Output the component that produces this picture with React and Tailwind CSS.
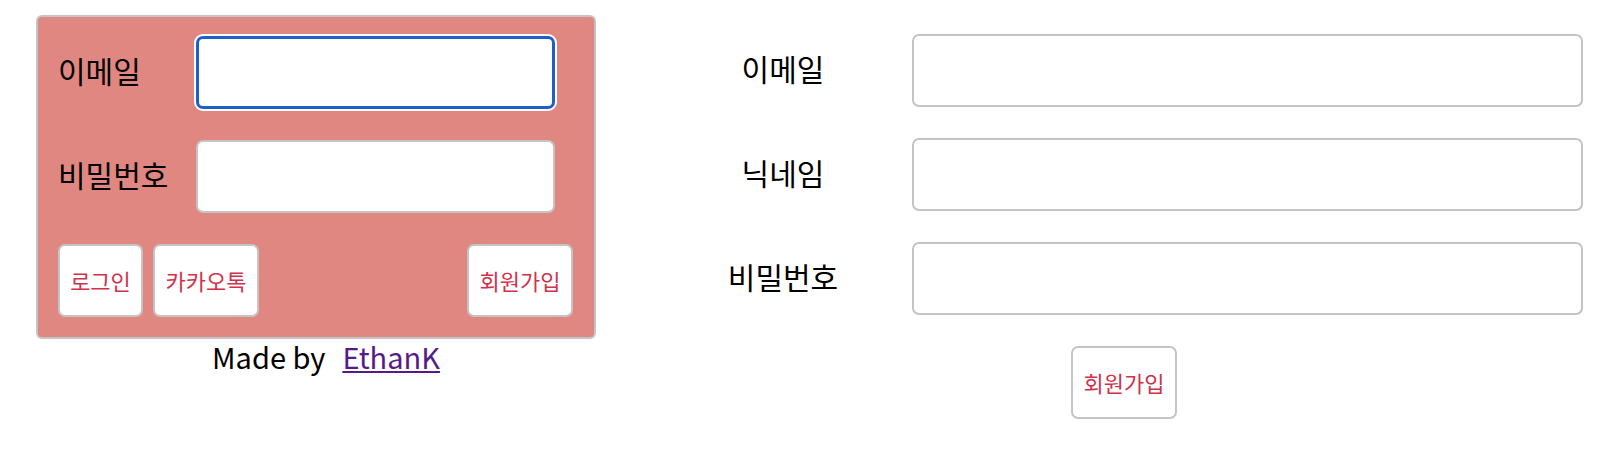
export default function App() {
  const font = { fontFamily: '"Noto Sans CJK KR", "Noto Sans", sans-serif' };
  const btn =
    "h-[73px] bg-white border-2 border-[#c4c4c4] rounded-[7px] text-[22px] text-[#d1324b] flex items-center justify-center";
  return (
    <div style={font} className="flex pt-[15px] pl-[36px] text-black">
      <div className="w-[560px] flex flex-col">
        <div className="w-full border-2 border-[#c4c4c4] rounded-[6px] bg-[#e08782] pl-[20px] pr-[21px] pt-[19px] pb-[20px]">
          <div className="flex items-center h-[73px]">
            <div className="w-[138px] pb-[6px] text-[30px] leading-none">이메일</div>
            <div className="w-[359px] h-[73px] bg-white border-[3px] border-[#1f5fc9] rounded-[7px] ring-2 ring-white"></div>
          </div>
          <div className="flex items-center h-[73px] mt-[31px]">
            <div className="w-[138px] pb-[6px] text-[30px] leading-none">비밀번호</div>
            <div className="w-[359px] h-[73px] bg-white border-2 border-[#c4c4c4] rounded-[7px]"></div>
          </div>
          <div className="flex justify-between mt-[31px]">
            <div className="flex gap-[10px]">
              <button className={`${btn} w-[85px]`}>로그인</button>
              <button className={`${btn} w-[106px]`}>카카오톡</button>
            </div>
            <button className={`${btn} w-[106px]`}>회원가입</button>
          </div>
        </div>
        <div className="flex justify-center pl-[20px] text-[29px] leading-[34px]">
          <span>Made by</span>
          <a href="#" className="ml-[17px] text-[#551a8b] underline">EthanK</a>
        </div>
      </div>
      <div className="ml-[58px] w-[929px] pt-[19px] flex flex-col">
        <div className="flex items-center h-[73px]">
          <div className="w-[258px] pb-[6px] text-center text-[30px] leading-none">이메일</div>
          <div className="w-[671px] h-[73px] bg-white border-2 border-[#c4c4c4] rounded-[7px]"></div>
        </div>
        <div className="flex items-center h-[73px] mt-[31px]">
          <div className="w-[258px] pb-[6px] text-center text-[30px] leading-none">닉네임</div>
          <div className="w-[671px] h-[73px] bg-white border-2 border-[#c4c4c4] rounded-[7px]"></div>
        </div>
        <div className="flex items-center h-[73px] mt-[31px]">
          <div className="w-[258px] pb-[6px] text-center text-[30px] leading-none">비밀번호</div>
          <div className="w-[671px] h-[73px] bg-white border-2 border-[#c4c4c4] rounded-[7px]"></div>
        </div>
        <div className="mt-[31px] pl-[417px]">
          <button className={`${btn} w-[106px]`}>회원가입</button>
        </div>
      </div>
    </div>
  );
}
